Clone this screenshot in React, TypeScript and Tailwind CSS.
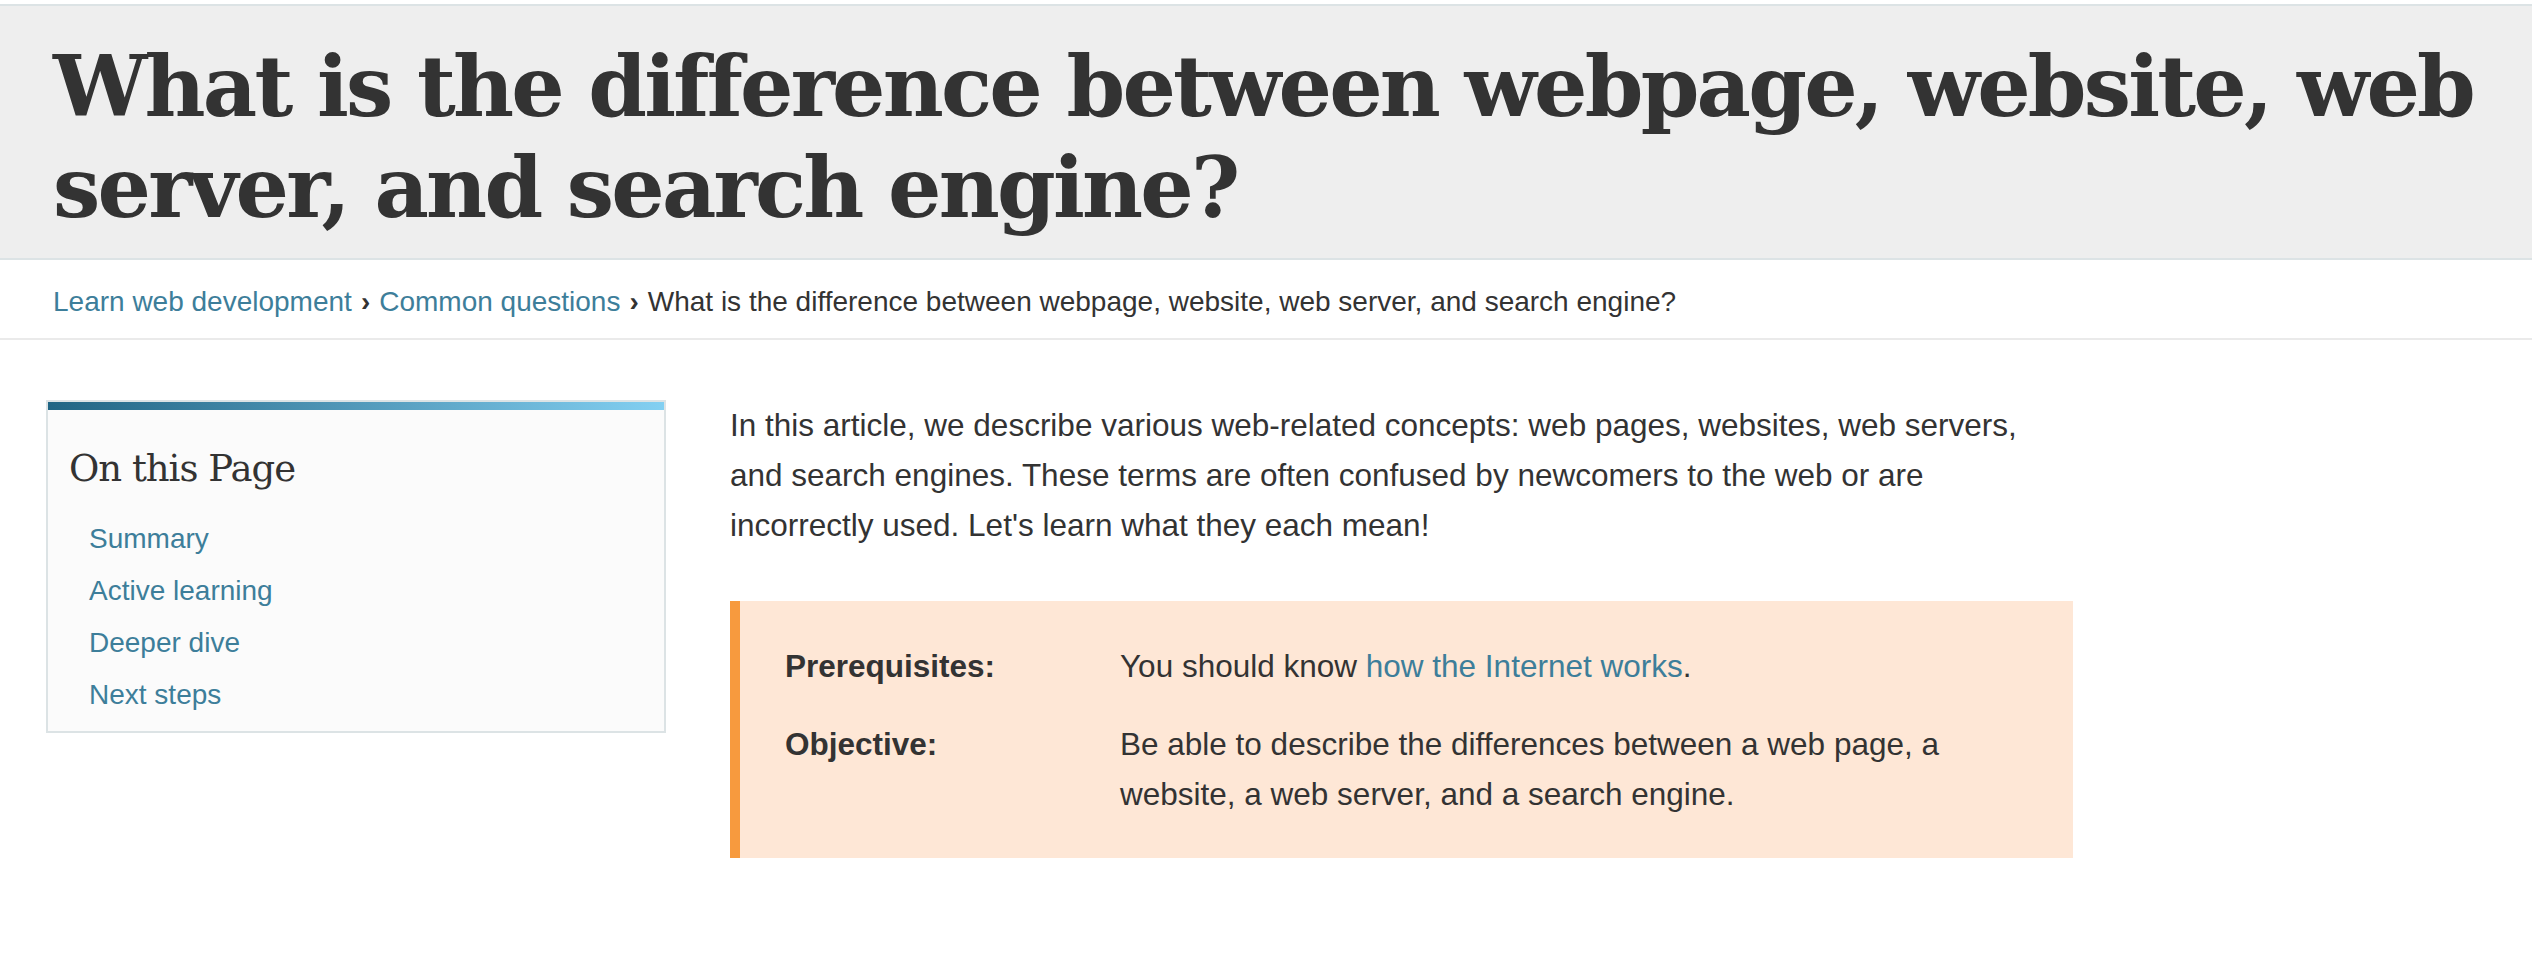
export default function App() {
  return (
    <div className="min-h-screen bg-white text-[#333] font-['Liberation_Sans',Arial,sans-serif] pt-[4px]">
      {/* Title band */}
      <header className="bg-[#eeeeee] border-t-2 border-b-2 border-[#dce3e5] px-[53px] pt-[30px] pb-[20px]">
        <h1 className="font-['DejaVu_Serif',serif] font-bold text-[84px] leading-[101px] tracking-[-2.8px] text-[#333]">
          What is the difference between webpage, website, web server, and search engine?
        </h1>
      </header>

      {/* Breadcrumbs */}
      <nav className="h-[80px] flex items-center px-[53px] pt-[6px] border-b-2 border-[#eaeaea] text-[28px]">
        <a className="text-[#3d7e9a]">Learn web development</a>
        <span className="mx-[9px] font-bold">›</span>
        <a className="text-[#3d7e9a]">Common questions</a>
        <span className="mx-[9px] font-bold">›</span>
        <span>What is the difference between webpage, website, web server, and search engine?</span>
      </nav>

      {/* Content */}
      <main className="flex items-start gap-[64px] pl-[46px] pt-[60px]">
        <aside className="w-[620px] shrink-0 border-2 border-[#dce3e5] bg-[#fbfbfb]">
          <div className="h-[8px] bg-gradient-to-r from-[#206584] to-[#83d0f2]"></div>
          <div className="pl-[21px] pt-[33px] pb-[10px]">
            <h2 className="font-['DejaVu_Serif',serif] text-[37px] leading-[52px] tracking-[-1px] mb-[18px]">On this Page</h2>
            <ul className="pl-[20px] text-[28px] leading-[52px] text-[#3d7e9a]">
              <li>Summary</li>
              <li>Active learning</li>
              <li>Deeper dive</li>
              <li>Next steps</li>
            </ul>
          </div>
        </aside>

        <article className="w-[1343px] text-[31.5px] leading-[50px]">
          <p>
            In this article, we describe various web-related concepts: web pages, websites, web servers, and search
            engines. These terms are often confused by newcomers to the web or are incorrectly used. Let's learn what
            they each mean!
          </p>

          <div className="mt-[51px] bg-[#fee7d6] border-l-[10px] border-[#f79a3e] pl-[45px] pr-[40px] pt-[40px] pb-[39px]">
            <div className="grid grid-cols-[335px_1fr] gap-y-[28px]">
              <div className="font-bold">Prerequisites:</div>
              <div>
                You should know <a className="text-[#3d7e9a]">how the Internet works</a>.
              </div>
              <div className="font-bold">Objective:</div>
              <div>
                Be able to describe the differences between a web page, a website, a web server, and a search engine.
              </div>
            </div>
          </div>
        </article>
      </main>
    </div>
  );
}
